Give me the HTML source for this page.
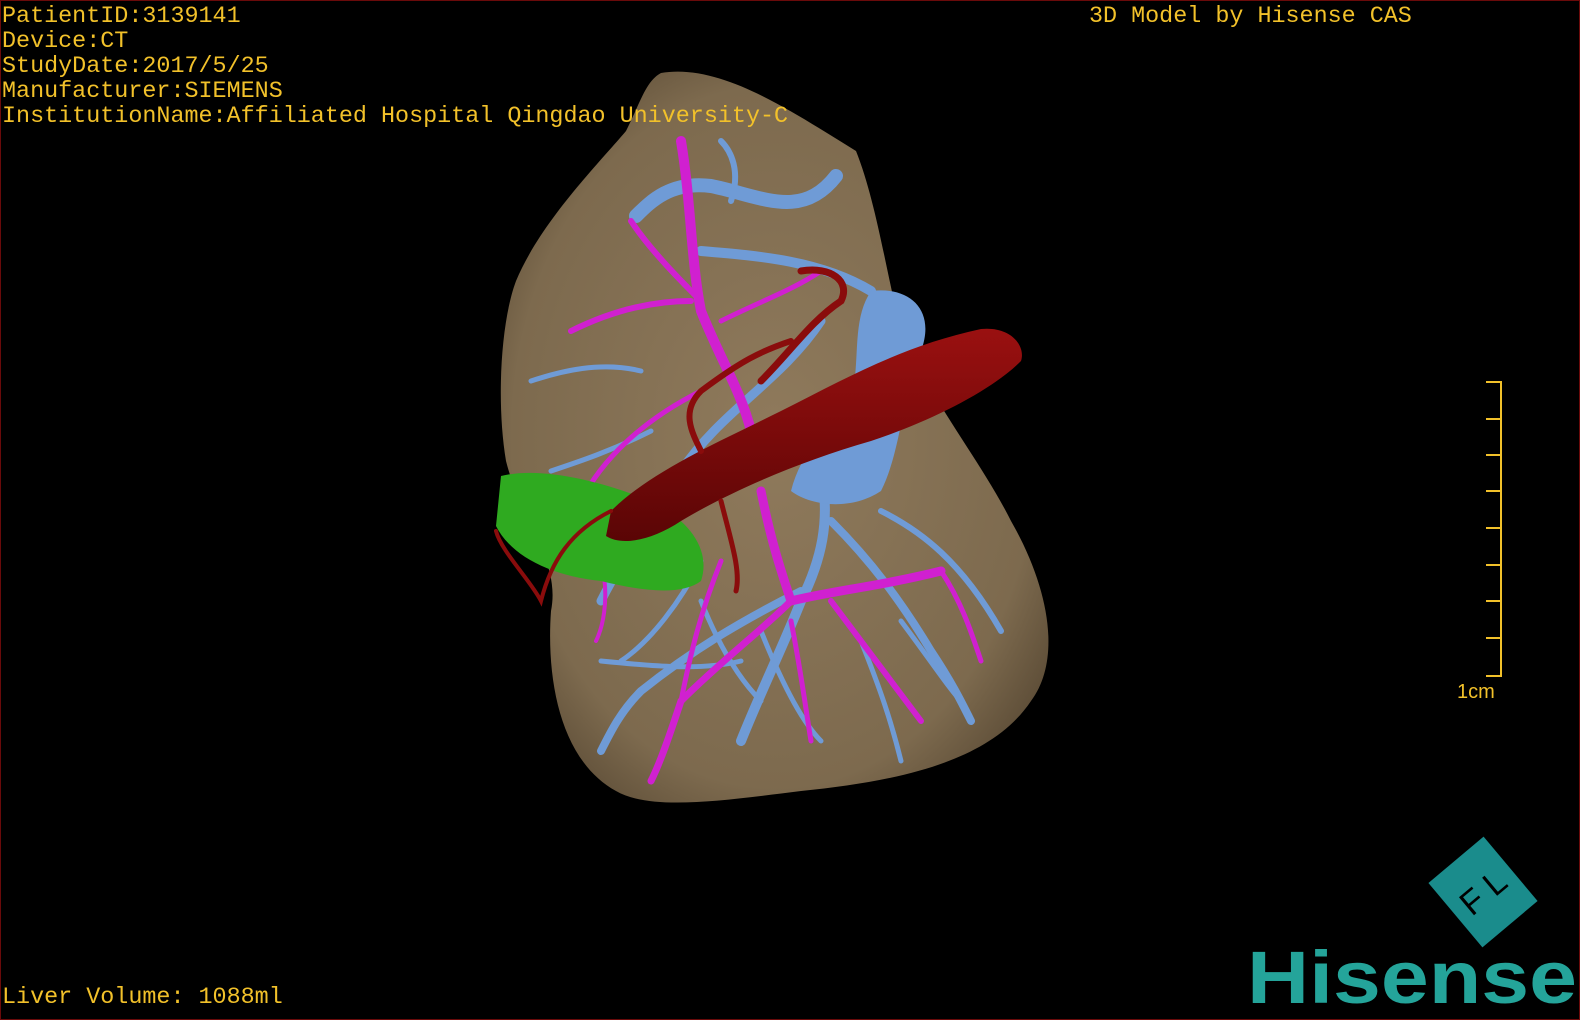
<!DOCTYPE html>
<html><head><meta charset="utf-8">
<style>
html,body{margin:0;padding:0;background:#000;}
#c{position:relative;width:1580px;height:1020px;background:#000;overflow:hidden;box-sizing:border-box;border:1px solid #6a0a0a;}
.t{position:absolute;font-family:"Liberation Mono",monospace;font-size:23.4px;color:#f2c12a;line-height:25px;white-space:pre;}
svg{position:absolute;left:0;top:0;}
</style></head><body>
<div id="c">
<svg width="1580" height="1020" viewBox="0 0 1580 1020">
<defs>
<radialGradient id="lv" cx="0.5" cy="0.5" r="0.6">
<stop offset="0" stop-color="#8f7a5c"/><stop offset="0.8" stop-color="#7d6a4e"/><stop offset="1" stop-color="#5e4e38"/>
</radialGradient>
<linearGradient id="ivc" x1="0" y1="0" x2="0" y2="1"><stop offset="0" stop-color="#9a1010"/><stop offset="1" stop-color="#5a0505"/></linearGradient>
</defs>
<path d="M660,72 C720,62 790,110 855,150 C875,200 885,270 900,330 C930,400 980,460 1010,520 C1050,590 1060,660 1030,700 C990,760 900,780 800,790 C720,800 650,810 615,790 C560,760 545,680 550,610 C560,560 520,520 505,460 C495,400 500,320 515,280 C540,220 600,160 625,130 C640,100 645,80 660,72 Z" fill="url(#lv)"/>
<g stroke="#6f9bd6" fill="none" stroke-linecap="round">
<path d="M835,175 C800,220 760,195 710,185 C670,180 650,200 635,215" stroke-width="14"/>
<path d="M700,250 C760,255 820,260 870,290" stroke-width="10"/>
<path d="M820,320 C780,380 720,410 680,470 C650,520 620,560 600,600" stroke-width="9"/>
<path d="M820,470 C830,520 820,560 800,600 C780,650 760,690 740,740" stroke-width="10"/>
<path d="M830,520 C870,560 900,600 930,650 C950,680 960,700 970,720" stroke-width="8"/>
<path d="M800,590 C740,620 690,650 640,690 C620,710 610,730 600,750" stroke-width="8"/>
<path d="M880,510 C920,530 960,560 1000,630" stroke-width="6"/>
<path d="M700,560 C680,600 650,640 620,660" stroke-width="5"/>
<path d="M640,370 C600,360 560,370 530,380" stroke-width="5"/>
<path d="M650,430 C610,450 580,460 550,470" stroke-width="5"/>
<path d="M760,630 C780,680 800,720 820,740" stroke-width="5"/>
<path d="M860,640 C880,690 890,720 900,760" stroke-width="5"/>
<path d="M700,600 C720,650 740,680 760,700" stroke-width="5"/>
<path d="M730,200 C740,170 730,150 720,140" stroke-width="6"/>
<path d="M600,660 C650,665 700,670 740,660" stroke-width="5"/>
<path d="M900,620 C930,660 950,690 960,700" stroke-width="5"/>
</g>
<path d="M870,290 C910,285 935,310 920,350 C900,400 900,450 880,490 C850,510 810,505 790,490 C800,450 830,420 850,400 C860,360 850,320 870,290 Z" fill="#6f9bd6"/>
<g stroke="#d020d0" fill="none" stroke-linecap="round">
<path d="M680,140 C690,200 690,260 700,310 C720,360 740,390 750,430" stroke-width="10"/>
<path d="M690,300 C650,300 610,310 570,330" stroke-width="6"/>
<path d="M630,220 C650,250 680,280 700,300" stroke-width="6"/>
<path d="M720,320 C760,300 790,290 820,270" stroke-width="5"/>
<path d="M760,490 C770,540 780,570 790,600 C830,590 880,585 940,570" stroke-width="9"/>
<path d="M790,600 C760,630 720,660 680,700 C670,730 660,760 650,780" stroke-width="7"/>
<path d="M830,600 C860,640 890,680 920,720" stroke-width="6"/>
<path d="M790,620 C800,670 805,710 810,740" stroke-width="5"/>
<path d="M700,390 C640,420 600,460 580,500" stroke-width="5"/>
<path d="M720,560 C700,610 690,650 680,700" stroke-width="5"/>
<path d="M940,570 C960,600 970,630 980,660" stroke-width="5"/>
<path d="M600,560 C610,600 600,630 595,640" stroke-width="4"/>
</g>
<path d="M500,475 C540,465 600,480 650,500 C690,520 710,550 700,580 C680,595 640,590 600,580 C550,575 510,555 495,525 Z" fill="#2faa20"/>
<path d="M610,510 C650,470 720,440 780,410 C840,380 900,345 980,328 C1010,325 1025,345 1020,360 C990,390 930,420 870,440 C800,460 730,490 680,520 C650,540 620,545 605,535 Z" fill="url(#ivc)"/>
<g stroke="#8a0c0c" fill="none" stroke-linecap="round">
<path d="M760,380 C790,350 810,320 840,300 C850,280 830,265 800,270" stroke-width="7"/>
<path d="M790,340 C760,350 740,360 700,390 C680,410 690,430 700,450" stroke-width="6"/>
<path d="M610,510 C570,530 550,560 540,600 C530,580 500,550 495,530" stroke-width="4"/>
<path d="M720,500 C730,540 740,570 735,590" stroke-width="5"/>
</g>
</svg>
<div class="t" style="left:1px;top:4px;">PatientID:3139141
Device:CT
StudyDate:2017/5/25
Manufacturer:SIEMENS
InstitutionName:Affiliated Hospital Qingdao University-C</div>
<div class="t" style="left:1088px;top:4px;">3D Model by Hisense CAS</div>
<div class="t" style="left:1px;top:985px;">Liver Volume: 1088ml</div>
<svg width="1580" height="1020">
<g stroke="#f2c12a" stroke-width="2" fill="none">
<path d="M1485,381 H1500 V675 H1485"/>
<path d="M1485,418H1500M1485,454H1500M1485,490H1500M1485,527H1500M1485,564H1500M1485,600H1500M1485,637H1500"/>
</g>
<text x="1456" y="697" font-family="Liberation Sans,sans-serif" font-size="20" fill="#f2c12a">1cm</text>
<g transform="translate(1482,891) rotate(-40)">
<rect x="-36" y="-42" width="72" height="84" fill="#1a8c8c"/>
<text x="0" y="12" text-anchor="middle" font-family="Liberation Sans,sans-serif" font-size="34" fill="#000">F L</text>
</g>
<text x="1246" y="1002" font-family="Liberation Sans,sans-serif" font-weight="bold" font-size="74" fill="#24a49a" textLength="330" lengthAdjust="spacingAndGlyphs">Hisense</text>
</svg>
</div>
</body></html>
